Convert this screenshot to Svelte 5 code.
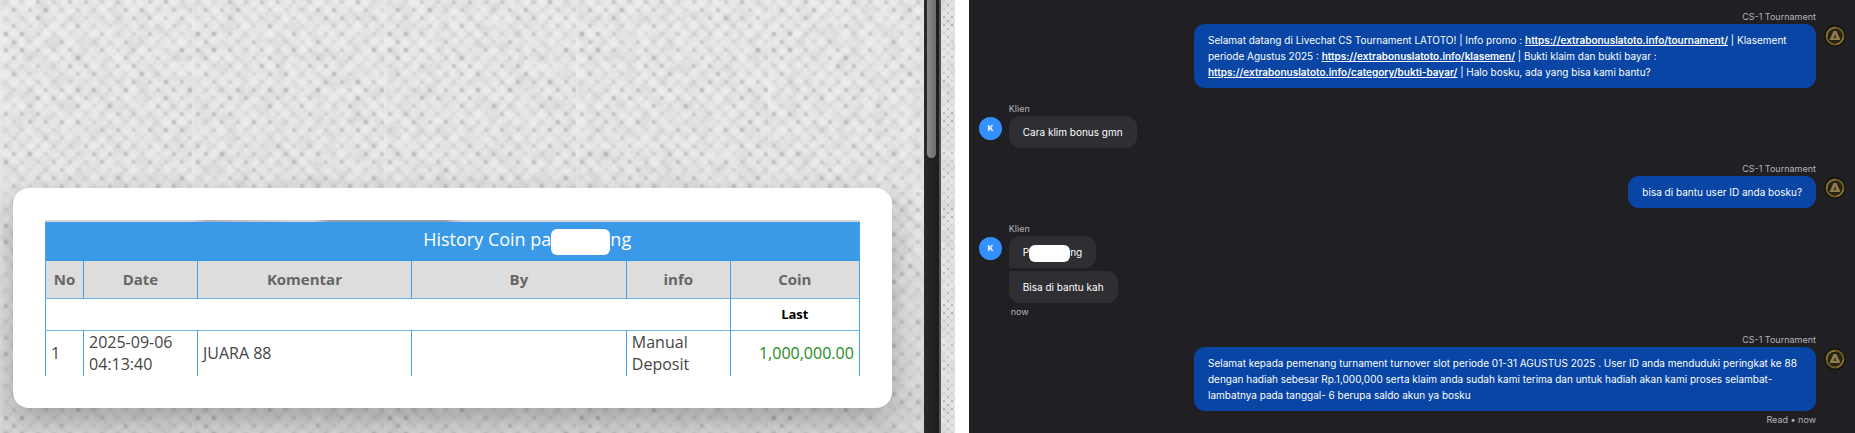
<script>
  const columns = ["No", "Date", "Komentar", "By", "info", "Coin"];
  const widths = [38, 114, 214, 215, 104, 129];
  const totalWidth = widths.reduce((a, b) => a + b, 0);

  const rows = [
    { no: 1, date: "2025-09-06 04:13:40", note: "JUARA 88", by: "", info: "Manual Deposit", coin: "1,000,000.00" }
  ];

  const threads = [
    {
      from: "agent",
      name: "CS-1 Tournament",
      bubbles: [
        [
          { text: "Selamat datang di Livechat CS Tournament LATOTO! | Info promo : " },
          { link: "https://extrabonuslatoto.info/tournament/" },
          { text: " | Klasement periode Agustus 2025 : " },
          { link: "https://extrabonuslatoto.info/klasemen/" },
          { text: " | Bukti klaim dan bukti bayar : " },
          { link: "https://extrabonuslatoto.info/category/bukti-bayar/" },
          { text: " | Halo bosku, ada yang bisa kami bantu?" }
        ]
      ]
    },
    { from: "client", name: "Klien", bubbles: [[{ text: "Cara klim bonus gmn" }]] },
    { from: "agent", name: "CS-1 Tournament", bubbles: [[{ text: "bisa di bantu user ID anda bosku?" }]] },
    {
      from: "client",
      name: "Klien",
      bubbles: [
        [{ text: "P" }, { hidden: true }, { text: "ng" }],
        [{ text: "Bisa di bantu kah" }]
      ],
      status: "now"
    },
    {
      from: "agent",
      name: "CS-1 Tournament",
      bubbles: [
        [
          {
            text: "Selamat kepada pemenang turnament turnover slot periode 01-31 AGUSTUS 2025 . User ID anda menduduki peringkat ke 88 dengan hadiah sebesar Rp.1,000,000 serta klaim anda sudah kami terima dan untuk hadiah akan kami proses selambat-lambatnya pada tanggal- 6 berupa saldo akun ya bosku"
          }
        ]
      ],
      status: "Read • now"
    }
  ];

  // woven paper texture: one knot every 8px on alternating rows
  let seed = 7;
  function rand() {
    seed = (seed * 16807) % 2147483647;
    return seed / 2147483647;
  }

  const knots = [];
  for (let y = 0; y < 24; y++) {
    for (let x = 0; x < 24; x++) {
      if ((x + y) % 2 === 0) {
        knots.push({ x: x * 8 + 6, y: y * 8 + 2, o: 0.02 + rand() * rand() * 0.3 });
      }
    }
  }
</script>

{#snippet texture(id, scale)}
  <svg class="texture" width="100%" height="100%" aria-hidden="true">
    <defs>
      <filter id="{id}-soft" x="0" y="0" width="100%" height="100%">
        <feGaussianBlur stdDeviation="0.8" />
      </filter>
      <filter id="{id}-grain" x="0" y="0" width="100%" height="100%">
        <feTurbulence type="fractalNoise" baseFrequency="0.08" numOctaves="2" seed="4" />
        <feColorMatrix values="0 0 0 0 0.4  0 0 0 0 0.4  0 0 0 0 0.4  0.5 0 0 0 -0.18" />
      </filter>
      <pattern id="{id}-weave" width="192" height="192" patternUnits="userSpaceOnUse" patternTransform="scale({scale})">
        <g filter="url(#{id}-soft)">
          {#each knots as k}
            <path d="M{k.x - 4} {k.y - 4}l8 8M{k.x + 4} {k.y - 4}l-8 8" stroke="#777" stroke-opacity="0.09" stroke-width="2" />
            <circle cx={k.x} cy={k.y} r="2" fill="#333" fill-opacity={k.o + 0.04} />
          {/each}
        </g>
      </pattern>
    </defs>
    <rect width="100%" height="100%" filter="url(#{id}-grain)" />
    <rect width="100%" height="100%" fill="url(#{id}-weave)" />
  </svg>
{/snippet}

{#snippet emblem()}
  <svg class="emblem" viewBox="0 0 24 24" aria-hidden="true">
    <circle cx="12" cy="12" r="11" fill="#16140e" />
    <circle cx="12" cy="12" r="8.5" fill="#26221a" stroke="#6b5b20" stroke-width="2" />
    <path d="M4 13a8 8 0 0 1 8-9M20 13a8 8 0 0 1-6 7" fill="none" stroke="#9c8534" stroke-width="1" />
    <path d="M10.500 7h3l4 9H6.500z" fill="#8f7d4c" />
    <path d="M12 10l1.500 4h-3z" fill="#3a3322" />
  </svg>
{/snippet}

<div class="screen">
  <section class="history">
    {@render texture("paper", 1)}
    <div class="card">
      <div class="sliver"></div>
      <table>
        <colgroup>
          {#each widths as w}
            <col style="width: {(w / totalWidth) * 100}%" />
          {/each}
        </colgroup>
        <thead>
          <tr class="title">
            <th colspan="6">History Coin pa<span class="mask"></span>ng</th>
          </tr>
          <tr class="heads">
            {#each columns as c}
              <th>{c}</th>
            {/each}
          </tr>
        </thead>
        <tbody>
          <tr class="last">
            <td colspan="5"></td>
            <td>Last</td>
          </tr>
          {#each rows as r}
            <tr class="entry">
              <td>{r.no}</td>
              <td>{r.date}</td>
              <td>{r.note}</td>
              <td>{r.by}</td>
              <td>{r.info}</td>
              <td class="coin">{r.coin}</td>
            </tr>
          {/each}
        </tbody>
      </table>
    </div>
  </section>

  <div class="track"><div class="thumb"></div></div>
  <div class="edge">{@render texture("edge", 0.5)}</div>

  <section class="chat">
    {#each threads as t}
      <div class="thread {t.from}">
        {#if t.from === "client"}
          <div class="avatar">K</div>
        {/if}
        <div class="stack">
          <div class="name">{t.name}</div>
          {#each t.bubbles as parts}
            <div class="bubble">
              {#each parts as p}{#if p.link}<a href={p.link}>{p.link}</a>{:else if p.hidden}<span class="mask"></span>{:else}{p.text}{/if}{/each}
            </div>
          {/each}
          {#if t.status}
            <div class="status">{t.status}</div>
          {/if}
        </div>
        {#if t.from === "agent"}
          {@render emblem()}
        {/if}
      </div>
    {/each}
  </section>
</div>

<style>
  :global(body) {
    background: #fff;
  }

  .screen {
    display: flex;
    min-height: 100vh;
  }

  .history {
    position: relative;
    flex: none;
    width: 49.8%;
    box-sizing: border-box;
    padding: 188px 32px 25px 13px;
    background: linear-gradient(180deg, #ededed 0%, #ebebeb 35%, #dadada 100%);
    overflow: hidden;
  }

  .texture {
    position: absolute;
    inset: 0;
  }

  .card {
    position: relative;
    padding: 32px;
    border-radius: 16px;
    background: #fff;
    box-shadow: 0 12px 28px rgba(0, 0, 0, 0.24);
  }

  .sliver {
    height: 2px;
    background: linear-gradient(90deg, #d3d6d8 18%, #a9b0b8 20%, #d3d6d8 30%, #d3d6d8 33%, #949ca8 35%, #949ca8 49%, #d3d6d8 51%);
  }

  table {
    width: 100%;
    table-layout: fixed;
    border-collapse: collapse;
    font-family: "Open Sans", "Noto Sans", sans-serif;
    font-size: 16px;
    line-height: 22px;
    color: #444;
  }

  th,
  td {
    box-sizing: border-box;
    padding: 0 5px;
    border-left: 1px solid #429fe8;
    border-right: 1px solid #429fe8;
  }

  .title th {
    height: 39px;
    padding-left: 19%;
    background: #3b9ae8;
    color: #fff;
    font-size: 18px;
    font-weight: 400;
  }

  .title .mask {
    display: inline-block;
    width: 59px;
    height: 26px;
    border-radius: 6px;
    background: #fff;
    vertical-align: middle;
  }

  .heads th {
    height: 37px;
    background: #ddd;
    color: #666;
    border-bottom: 1px solid #6fb5ec;
    font-size: 15px;
    font-weight: 700;
  }

  .last td {
    height: 32px;
    border-bottom: 1px solid #6fb5ec;
    color: #000;
    font-size: 13px;
    font-weight: 700;
    text-align: center;
  }

  .entry td {
    height: 46px;
  }

  .entry .coin {
    color: #1c8a1c;
    text-align: right;
  }

  .track {
    flex: 0 0 15px;
    border-right: 2px solid #555;
    background: linear-gradient(90deg, #292929, #1c1c1c);
  }

  .thumb {
    height: 158px;
    margin: 0 3px;
    border-radius: 0 0 5px 5px;
    background: linear-gradient(90deg, #8a8a8a, #6e6e6e);
  }

  .edge {
    position: relative;
    flex: 0 0 14px;
    margin-right: 14px;
    background: #e6e6e6;
  }

  .chat {
    flex: 1;
    min-width: 0;
    box-sizing: border-box;
    padding: 10px 8px 6px 10px;
    display: flex;
    flex-direction: column;
    gap: 14px;
    background: #202024;
    color: #fff;
    font-family: Inter, "Liberation Sans", sans-serif;
    font-size: 10px;
    font-weight: 400;
    line-height: 16px;
  }

  .thread {
    display: flex;
    gap: 7px;
  }

  .agent {
    justify-content: flex-end;
  }

  .stack {
    display: flex;
    flex-direction: column;
    align-items: flex-start;
    max-width: 622px;
  }

  .agent .stack {
    align-items: flex-end;
  }

  .name,
  .status {
    color: #b4b4bb;
    font-size: 9px;
    line-height: 14px;
  }

  .status {
    margin-top: 2px;
  }

  .client .status {
    padding-left: 2px;
  }

  .bubble {
    padding: 8px 14px;
    border-radius: 11px;
    background: #2e2e33;
  }

  .bubble + .bubble {
    margin-top: 3px;
    border-top-left-radius: 2px;
  }

  .bubble:has(+ .bubble) {
    border-bottom-left-radius: 2px;
  }

  .agent .bubble {
    background: #0845a4;
  }

  .bubble a {
    color: #fff;
    font-weight: 600;
  }

  .bubble .mask {
    display: inline-block;
    width: 41px;
    height: 17px;
    margin: -2px 0;
    border-radius: 6px;
    background: #fff;
    vertical-align: middle;
  }

  .avatar {
    flex: none;
    width: 23px;
    height: 23px;
    margin-top: 15px;
    border-radius: 50%;
    background: #348fff;
    font-size: 8px;
    font-weight: 700;
    line-height: 23px;
    text-align: center;
  }

  .emblem {
    flex: none;
    width: 24px;
    height: 24px;
    margin-top: 14px;
  }
</style>
